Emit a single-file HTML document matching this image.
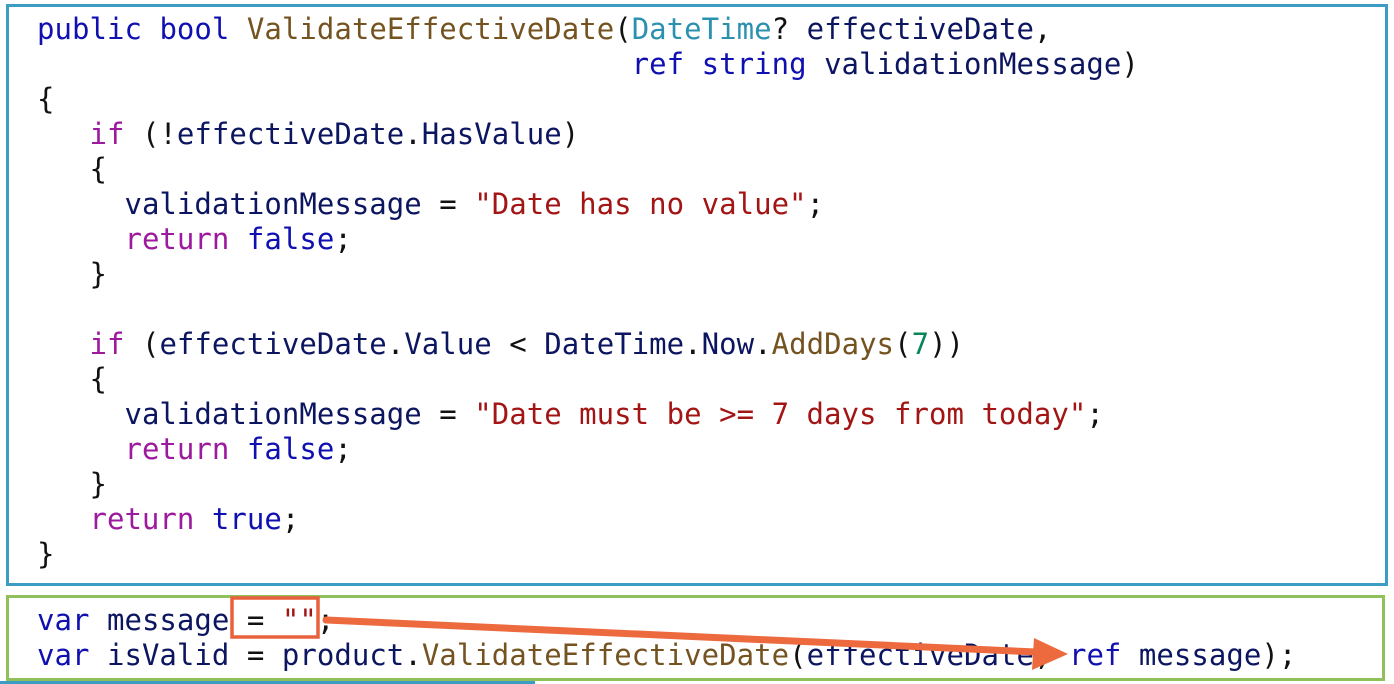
<!DOCTYPE html>
<html><head><meta charset="utf-8"><style>
html,body{margin:0;padding:0;background:#fff;width:1394px;height:684px;overflow:hidden;position:relative}
.box{position:absolute;box-sizing:border-box}
#b1{left:6px;top:4px;width:1382px;height:582px;border:3px solid #3d9cc4}
#b2{left:6px;top:595px;width:1379px;height:86px;border:3px solid #8fc05a}
pre{position:absolute;margin:0;left:37px;font-family:"DejaVu Sans Mono","Liberation Mono",monospace;font-size:29px;line-height:35px;color:#111;letter-spacing:0.03px}
.k{color:#1010b0}.p{color:#9b1a9e}.m{color:#745321}.t{color:#2b91af}.s{color:#a31515}.n{color:#098658}.i{color:#0c1660}
</style></head><body>
<div class="box" id="b1"></div>
<div class="box" id="b2"></div>
<pre style="top:12px"><span class="k">public</span> <span class="k">bool</span> <span class="m">ValidateEffectiveDate</span>(<span class="t">DateTime</span>? <span class="i">effectiveDate</span>,
                                  <span class="k">ref</span> <span class="k">string</span> <span class="i">validationMessage</span>)
{
   <span class="p">if</span> (!<span class="i">effectiveDate</span>.<span class="i">HasValue</span>)
   {
     <span class="i">validationMessage</span> = <span class="s">"Date has no value"</span>;
     <span class="p">return</span> <span class="k">false</span>;
   }

   <span class="p">if</span> (<span class="i">effectiveDate</span>.<span class="i">Value</span> &lt; <span class="i">DateTime</span>.<span class="i">Now</span>.<span class="m">AddDays</span>(<span class="n">7</span>))
   {
     <span class="i">validationMessage</span> = <span class="s">"Date must be &gt;= 7 days from today"</span>;
     <span class="p">return</span> <span class="k">false</span>;
   }
   <span class="p">return</span> <span class="k">true</span>;
}</pre>
<pre style="top:603px"><span class="k">var</span> <span class="i">message</span> = <span class="s">""</span>;
<span class="k">var</span> <span class="i">isValid</span> = <span class="i">product</span>.<span class="m">ValidateEffectiveDate</span>(<span class="i">effectiveDate</span>, <span class="k">ref</span> <span class="i">message</span>);</pre>
<svg style="position:absolute;left:0;top:0" width="1394" height="684">
<rect x="232" y="598" width="86" height="39" fill="none" stroke="#e8603c" stroke-width="3.5"/>
<line x1="326" y1="620" x2="1036" y2="652" stroke="#ec6a3e" stroke-width="7" stroke-linecap="round"/>
<polygon points="1034,638 1068,654 1032,670" fill="#ec6a3e"/>
<rect x="0" y="681" width="535" height="3" fill="#3d9cc4"/>
</svg>
</body></html>
